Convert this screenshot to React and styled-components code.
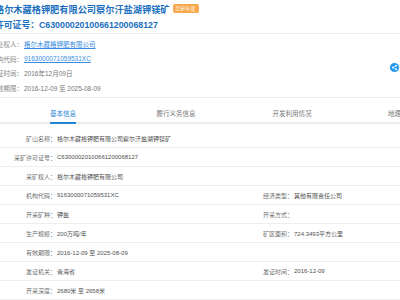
import styled, { createGlobalStyle } from 'styled-components';

const GlobalStyle = createGlobalStyle`
    html, body {
        margin: 0;
        padding: 0;
        overflow: hidden;
        background: #fff;
    }
    body {
        font-family: 'Liberation Sans', 'Noto Sans CJK SC', sans-serif;
    }
`;

const infoRows = [
    { label: '矿业权人：', value: '格尔木藏格钾肥有限公司', link: true },
    { label: '机构代码：', value: '9163000071059531XC', link: true },
    { label: '发证时间：', value: '2016年12月09日' },
    { label: '有效期限：', value: '2016-12-09  至  2025-08-09' },
];

const tabs = ['基本信息', '履行义务信息', '开发利用情况', '地理位置'];

const tableRows = [
    [['矿山名称：', '格尔木藏格钾肥有限公司察尔汗盐湖钾镁矿']],
    [['采矿许可证号：', 'C63000020100661200068127']],
    [['采矿权人：', '格尔木藏格钾肥有限公司']],
    [['机构代码：', '9163000071059531XC'], ['经济类型：', '其他有限责任公司']],
    [['开采矿种：', '钾盐'], ['开采方式：', '']],
    [['生产规模：', '200万吨/年'], ['矿区面积：', '724.3493平方公里']],
    [['有效期限：', '2016-12-09  至  2025-08-09']],
    [['发证机关：', '青海省'], ['发证时间：', '2016-12-09']],
    [['开采深度：', '2680米  至  2658米']],
];

function App() {
    return (
        <Page>
            <GlobalStyle />
            <Header>
                <TitleRow>
                    <Title>格尔木藏格钾肥有限公司察尔汗盐湖钾镁矿</Title>
                    <Badge>历史年度</Badge>
                </TitleRow>
                <License>许可证号：C63000020100661200068127</License>
            </Header>

            <InfoBlock>
                <InfoList>
                    {infoRows.map((r) => (
                        <InfoRow key={r.label}>
                            <InfoLabel>{r.label}</InfoLabel>
                            <InfoValue $link={r.link}>{r.value}</InfoValue>
                        </InfoRow>
                    ))}
                </InfoList>
                <ShareButton>
                    <svg width='9' height='9' viewBox='0 0 18 18'>
                        <circle cx='9' cy='9' r='9' fill='#2196ee' />
                        <circle cx='12' cy='5.6' r='1.9' fill='#fff' />
                        <circle cx='12' cy='12.4' r='1.9' fill='#fff' />
                        <circle cx='6' cy='9' r='1.9' fill='#fff' />
                        <path d='M6 9 L12 5.6 M6 9 L12 12.4' stroke='#fff' strokeWidth='1.2' />
                    </svg>
                </ShareButton>
            </InfoBlock>

            <TabBar>
                {tabs.map((t, i) => (
                    <Tab key={t}>
                        <TabLabel $active={i === 0}>{t}</TabLabel>
                    </Tab>
                ))}
            </TabBar>

            <Table>
                {tableRows.map((row, i) => (
                    <Row key={i}>
                        {row.map(([label, value]) => (
                            <Cell key={label}>
                                <CellLabel>{label}</CellLabel>
                                <CellValue>{value}</CellValue>
                            </Cell>
                        ))}
                    </Row>
                ))}
            </Table>
        </Page>
    );
}

export default App;

const Page = styled.div`
    width: 400px;
    height: 300px;
    overflow: hidden;
    background: #fff;
`;

const Header = styled.div`
    margin-left: -5px;
    width: 405px;
    border-bottom: 1px solid #eeeeee;
`;

const TitleRow = styled.div`
    display: flex;
    align-items: center;
    height: 17px;
`;

const Title = styled.div`
    font-size: 9.2px;
    font-weight: bold;
    color: #1c6fbe;
    white-space: nowrap;
`;

const Badge = styled.span`
    margin-left: 3px;
    height: 9px;
    padding: 0 3px;
    border-radius: 2px;
    background: #f8a84b;
    color: #fff;
    font-size: 5px;
    line-height: 9px;
    white-space: nowrap;
`;

const License = styled.div`
    height: 16px;
    line-height: 16px;
    font-size: 8.8px;
    font-weight: bold;
    color: #1c6fbe;
    white-space: nowrap;
`;

const InfoBlock = styled.div`
    display: flex;
    align-items: center;
    justify-content: space-between;
    padding: 3px 1px 2px 0;
    border-bottom: 1px solid #eeeeee;
`;

const InfoList = styled.div`
    display: flex;
    flex-direction: column;
`;

const InfoRow = styled.div`
    display: flex;
    align-items: center;
    height: 14.5px;
    font-size: 6.5px;
    white-space: nowrap;
`;

const InfoLabel = styled.span`
    width: 34px;
    margin-left: -11px;
    text-align: right;
    color: #888;
    flex-shrink: 0;
`;

const InfoValue = styled.span`
    margin-left: 1px;
    color: ${(p) => (p.$link ? '#3a8ee2' : '#777')};
    text-decoration: ${(p) => (p.$link ? 'underline' : 'none')};
`;

const ShareButton = styled.div`
    width: 9px;
    height: 9px;
    display: flex;
    margin-top: 2px;

    svg {
        display: block;
    }
`;

const TabBar = styled.div`
    display: grid;
    grid-template-columns: 7px 112px 114px 118px 100px;
    height: 24px;
    border-bottom: 2px solid #ececec;
    background: #fff;

    &::before {
        content: '';
    }
`;

const Tab = styled.div`
    display: flex;
    justify-content: center;
    align-items: stretch;
`;

const TabLabel = styled.span`
    display: flex;
    align-items: center;
    padding-top: 6px;
    margin-bottom: -2px;
    border-bottom: 2px solid ${(p) => (p.$active ? '#1f87d8' : 'transparent')};
    font-size: 6.5px;
    color: ${(p) => (p.$active ? '#1f87d8' : '#777')};
    white-space: nowrap;
`;

const Table = styled.div`
    padding-top: 5px;
`;

const Row = styled.div`
    display: grid;
    grid-template-columns: 237px 1fr;
    height: 19px;
    border-bottom: 1px solid #eeeeee;
    box-sizing: border-box;
`;

const Cell = styled.div`
    display: flex;
    align-items: center;
    font-size: 6px;
    white-space: nowrap;
`;

const CellLabel = styled.span`
    width: 56px;
    flex-shrink: 0;
    text-align: right;
    color: #6f6f6f;
`;

const CellValue = styled.span`
    margin-left: 1px;
    color: #4f4f4f;
`;
